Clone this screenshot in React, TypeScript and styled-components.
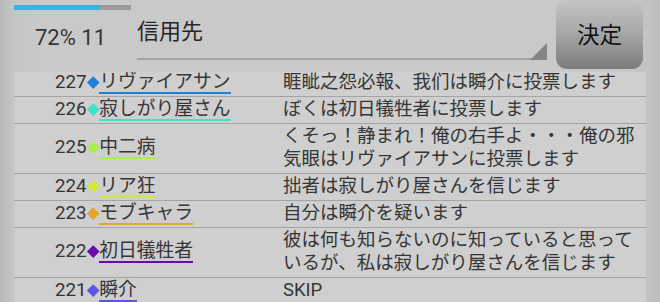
import React from "react";
import styled, { createGlobalStyle } from "styled-components";

const Global = createGlobalStyle`
  html, body { margin: 0; padding: 0; }
  body {
    width: 660px;
    height: 302px;
    overflow: hidden;
    font-family: Roboto, "Noto Sans CJK JP", sans-serif;
    background: linear-gradient(90deg, #b9b9b9 0px, #c6c6c6 14px, #c9c9c9 40px, #c9c9c9 620px, #c3c3c3 646px, #bdbdbd 660px);
  }
`;

const Screen = styled.div`
  width: 660px;
  height: 302px;
  display: flex;
  flex-direction: column;
`;

const Header = styled.div`
  height: 72px;
  display: flex;
  align-items: flex-start;
  padding-left: 14px;
  box-sizing: border-box;
`;

const StatusBox = styled.div`
  width: 117px;
  display: flex;
  flex-direction: column;
`;

const Progress = styled.div`
  margin-top: 5px;
  height: 5px;
  background: #9b9b9b;
  display: flex;
`;

const ProgressFill = styled.div`
  height: 100%;
  background: #33b5e5;
`;

const StatText = styled.div`
  margin-top: 15px;
  padding-left: 21px;
  font-size: 22px;
  line-height: 26px;
  color: #353535;
  white-space: nowrap;
`;

const Spinner = styled.div`
  position: relative;
  margin-left: 6px;
  width: 410px;
  height: 60px;
  border-bottom: 2px solid #a2a2a2;
  box-sizing: border-box;
  padding-top: 19px;
  font-size: 22px;
  line-height: 26px;
  color: #262626;
  &::after {
    content: "";
    position: absolute;
    right: 0;
    bottom: -2px;
    width: 0;
    height: 0;
    border-style: solid;
    border-width: 0 0 17px 17px;
    border-color: transparent transparent #858585 transparent;
  }
`;

const DecideButton = styled.button`
  margin-left: 9px;
  width: 87px;
  height: 69px;
  border: none;
  border-radius: 11px;
  background: linear-gradient(180deg, #c4c4c4 0%, #a9a9a9 45%, #7c7c7c 100%);
  font-family: Roboto, "Noto Sans CJK JP", sans-serif;
  font-size: 22.5px;
  color: #111;
  padding: 0 0 4px 0;
  display: flex;
  align-items: center;
  justify-content: center;
`;

const List = styled.div`
  margin-left: 14px;
  width: 632px;
  flex: 1;
  background: #cfcfcf;
  overflow: hidden;
`;

const ListInner = styled.div`
  margin-top: -2px;
`;

const Row = styled.div`
  display: grid;
  grid-template-columns: 269px 1fr;
  border-bottom: 1px solid #a4a4a4;
`;

const Who = styled.div`
  display: flex;
  align-items: center;
  padding-left: 41px;
  font-size: 18.8px;
  color: #353535;
`;

const Num = styled.span`
  line-height: 19px;
  padding-bottom: 2px;
`;

const Diamond = styled.span<{ $c: string }>`
  width: 8.5px;
  height: 8.5px;
  margin: 0 2px 2px 2px;
  background: ${(p) => p.$c};
  transform: rotate(45deg);
  flex: none;
`;

const Name = styled.span<{ $c: string }>`
  line-height: 19px;
  border-bottom: 2px solid ${(p) => p.$c};
  white-space: nowrap;
`;

const Message = styled.div`
  font-size: 18.5px;
  line-height: 23px;
  padding: 1px 10px 2px 0;
  color: #353535;
`;

type Entry = { no: number; name: string; color: string; msg: string };

const entries: Entry[] = [
  { no: 227, name: "リヴァイアサン", color: "#1f80d8", msg: "睚眦之怨必報、我们は瞬介に投票します" },
  { no: 226, name: "寂しがり屋さん", color: "#3de3c6", msg: "ぼくは初日犠牲者に投票します" },
  { no: 225, name: "中二病", color: "#a8f04c", msg: "くそっ！静まれ！俺の右手よ・・・俺の邪気眼はリヴァイアサンに投票します" },
  { no: 224, name: "リア狂", color: "#d3e83e", msg: "拙者は寂しがり屋さんを信じます" },
  { no: 223, name: "モブキャラ", color: "#dfa72f", msg: "自分は瞬介を疑います" },
  { no: 222, name: "初日犠牲者", color: "#6a0aae", msg: "彼は何も知らないのに知っていると思っているが、私は寂しがり屋さんを信じます" },
  { no: 221, name: "瞬介", color: "#5b55e6", msg: "SKIP" },
];

export default function App() {
  return (
    <Screen>
      <Global />
      <Header>
        <StatusBox>
          <Progress>
            <ProgressFill style={{ width: "73%" }} />
          </Progress>
          <StatText>72% 11</StatText>
        </StatusBox>
        <Spinner>信用先</Spinner>
        <DecideButton>決定</DecideButton>
      </Header>
      <List>
        <ListInner>
          {entries.map((e) => (
            <Row key={e.no}>
              <Who>
                <Num>{e.no}</Num>
                <Diamond $c={e.color} />
                <Name $c={e.color}>{e.name}</Name>
              </Who>
              <Message>{e.msg}</Message>
            </Row>
          ))}
        </ListInner>
      </List>
    </Screen>
  );
}
